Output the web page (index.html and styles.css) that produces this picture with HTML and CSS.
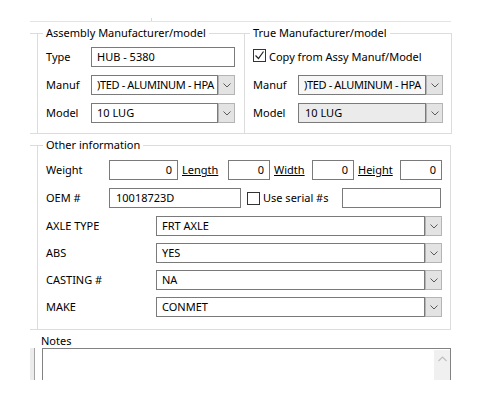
FILE: index.html
```html
<!DOCTYPE html>
<html>
<head lang="en">
    <meta charset="UTF-8">
    <title>Hub details</title>
    <link rel="stylesheet" href="styles.css">
</head>
<body>
<div class="page">
    <div class="top_rule"><span class="tick"></span></div>

    <div class="group_row">
        <fieldset class="grp grp_assy">
            <legend>Assembly Manufacturer/model</legend>
            <div class="row">
                <span class="lbl w45">Type</span>
                <span class="box w144">HUB - 5380</span>
            </div>
            <div class="row mt8">
                <span class="lbl w45">Manuf</span>
                <span class="combo w144">
                    <span class="combo_text tight">)TED - ALUMINUM - HPA</span>
                    <span class="combo_btn"><svg width="8" height="5" viewBox="0 0 8 5"><polyline points="0.5,0.5 4,4 7.5,0.5"/></svg></span>
                </span>
            </div>
            <div class="row mt8">
                <span class="lbl w45">Model</span>
                <span class="combo w144">
                    <span class="combo_text">10 LUG</span>
                    <span class="combo_btn"><svg width="8" height="5" viewBox="0 0 8 5"><polyline points="0.5,0.5 4,4 7.5,0.5"/></svg></span>
                </span>
            </div>
        </fieldset>

        <fieldset class="grp grp_true">
            <legend>True Manufacturer/model</legend>
            <div class="row check_row">
                <span class="chk"><svg width="11" height="11" viewBox="0 0 11 11"><polyline points="1.5,5.5 4.5,8.5 9.5,1.5"/></svg></span>
                <span class="chk_text">Copy from Assy Manuf/Model</span>
            </div>
            <div class="row mt8">
                <span class="lbl w45">Manuf</span>
                <span class="combo w145 light">
                    <span class="combo_text tight">)TED - ALUMINUM - HPA</span>
                    <span class="combo_btn"><svg width="8" height="5" viewBox="0 0 8 5"><polyline points="0.5,0.5 4,4 7.5,0.5"/></svg></span>
                </span>
            </div>
            <div class="row mt8">
                <span class="lbl w45">Model</span>
                <span class="combo w145 grey">
                    <span class="combo_text">10 LUG</span>
                    <span class="combo_btn"><svg width="8" height="5" viewBox="0 0 8 5"><polyline points="0.5,0.5 4,4 7.5,0.5"/></svg></span>
                </span>
            </div>
        </fieldset>
    </div>

    <fieldset class="grp grp_other">
        <legend>Other information</legend>
        <div class="row">
            <span class="lbl w63">Weight</span>
            <span class="box num w69">0</span>
            <a href="" class="dim w50">Length</a>
            <span class="box num w42">0</span>
            <a href="" class="dim w42">Width</a>
            <span class="box num w42">0</span>
            <a href="" class="dim w46">Height</a>
            <span class="box num w42">0</span>
        </div>
        <div class="row mt8">
            <span class="lbl w63">OEM #</span>
            <span class="box w132">10018723D</span>
            <span class="chk ml6"></span>
            <span class="chk_text">Use serial #s</span>
            <span class="box w99 push"></span>
        </div>
        <div class="row mt8">
            <span class="lbl w110">AXLE TYPE</span>
            <span class="combo w286">
                <span class="combo_text">FRT AXLE</span>
                <span class="combo_btn"><svg width="8" height="5" viewBox="0 0 8 5"><polyline points="0.5,0.5 4,4 7.5,0.5"/></svg></span>
            </span>
        </div>
        <div class="row mt7">
            <span class="lbl w110">ABS</span>
            <span class="combo w286">
                <span class="combo_text">YES</span>
                <span class="combo_btn"><svg width="8" height="5" viewBox="0 0 8 5"><polyline points="0.5,0.5 4,4 7.5,0.5"/></svg></span>
            </span>
        </div>
        <div class="row mt7">
            <span class="lbl w110">CASTING #</span>
            <span class="combo w286">
                <span class="combo_text">NA</span>
                <span class="combo_btn"><svg width="8" height="5" viewBox="0 0 8 5"><polyline points="0.5,0.5 4,4 7.5,0.5"/></svg></span>
            </span>
        </div>
        <div class="row mt7">
            <span class="lbl w110">MAKE</span>
            <span class="combo w286">
                <span class="combo_text">CONMET</span>
                <span class="combo_btn"><svg width="8" height="5" viewBox="0 0 8 5"><polyline points="0.5,0.5 4,4 7.5,0.5"/></svg></span>
            </span>
        </div>
    </fieldset>

    <div class="notes">
        <div class="notes_lbl">Notes</div>
        <div class="notes_body">
            <span class="strip"></span>
            <div class="memo">
                <div class="memo_text"></div>
                <div class="vscroll"><svg width="9" height="6" viewBox="0 0 9 6"><polyline points="0.5,5 4.5,1 8.5,5"/></svg></div>
            </div>
        </div>
    </div>
</div>
</body>
</html>
```

FILE: styles.css
```css
*{margin:0;padding:0;box-sizing:border-box;}
body{background:#fff;color:#000;font-family:"Noto Sans","DejaVu Sans",sans-serif;font-size:11px;line-height:16px;}
.page{height:380px;overflow:hidden;padding-top:18px;}

/* top separator */
.top_rule{margin-left:30px;width:421px;border-bottom:1px solid #e3e3e3;}
.top_rule .tick{display:block;width:1px;height:3px;margin-left:121px;background:#d8d8d8;}

/* group boxes */
.group_row{display:flex;margin:3px 0 0 30px;}
.grp{border:1px solid #dcdcdc;min-width:0;}
.grp legend{margin-left:-3px;padding:0 3px;line-height:16px;}
.grp_assy{width:214px;border-left:none;border-right:none;padding:6px 9px 10px 16px;background:linear-gradient(#dcdcdc,#dcdcdc) 7px 0/1px 100% no-repeat;}
.grp_true{width:208px;padding:6px 9px 10px 8px;}
.grp_other{width:421px;margin:3px 0 0 30px;border-left:none;padding:7px 9px 12px 16px;background:linear-gradient(#dcdcdc,#dcdcdc) 7px 0/1px 100% no-repeat;}

/* rows */
.row{display:flex;align-items:center;height:20px;}
.mt7{margin-top:7px;}
.mt8{margin-top:8px;}
.ml6{margin-left:6px;}
.push{margin-left:auto;}
.lbl{flex:none;}
.w42{width:42px;}
.w45{width:45px;}
.w46{width:46px;}
.w50{width:50px;}
.w63{width:63px;}
.w69{width:69px;}
.w99{width:99px;}
.w110{width:110px;}
.w132{width:132px;}
.w144{width:144px;}
.w145{width:145px;}
.w286{width:286px;}

/* edit boxes */
.box{flex:none;height:20px;border:1px solid #7a7a7a;background:#fff;padding:0 5px;line-height:18px;white-space:nowrap;overflow:hidden;}
.box.num{text-align:right;}
.w132.box{padding-left:6px;}
a.dim{flex:none;color:#000;text-decoration:underline;padding-left:4px;}

/* combos */
.combo{flex:none;display:flex;height:20px;}
.combo_text{flex:1;min-width:0;border:1px solid #7a7a7a;background:#fff;padding:0 2px 0 5px;line-height:18px;white-space:nowrap;overflow:hidden;}
.combo_text.tight{letter-spacing:-0.35px;}
.combo.light .combo_text{background:#f7f7f7;}
.combo.grey .combo_text{background:#ebebeb;padding-left:6px;}
.combo_btn{flex:none;width:17px;border:1px solid #b4b4b4;background:#e3e3e3;display:flex;align-items:center;justify-content:center;}
.combo_btn svg{fill:none;stroke:#5a5a5a;stroke-width:1;}

/* check boxes */
.chk{flex:none;width:13px;height:13px;border:1px solid #333;background:#fff;display:flex;align-items:center;justify-content:center;}
.chk svg{fill:none;stroke:#222;stroke-width:1.2;}
.check_row{align-items:flex-start;}
.check_row .chk{margin-top:2px;}
.check_row .chk_text{line-height:20px;}
.chk_text{margin-left:3px;white-space:nowrap;}

/* notes */
.notes{margin:4px 0 0 30px;}
.notes_lbl{padding-left:11px;line-height:14px;}
.notes_body{display:flex;}
.strip{flex:none;width:5px;height:40px;background:#ececec;border-right:1px solid #a3a3a3;margin-right:7px;}
.memo{flex:none;display:flex;width:409px;height:60px;border:1px solid #828282;background:#fff;}
.memo_text{flex:1;}
.vscroll{flex:none;width:16px;margin-top:1px;background:#f0f0f0;display:flex;justify-content:center;padding-top:6px;}
.vscroll svg{fill:none;stroke:#bfbfbf;stroke-width:1.2;}
```
